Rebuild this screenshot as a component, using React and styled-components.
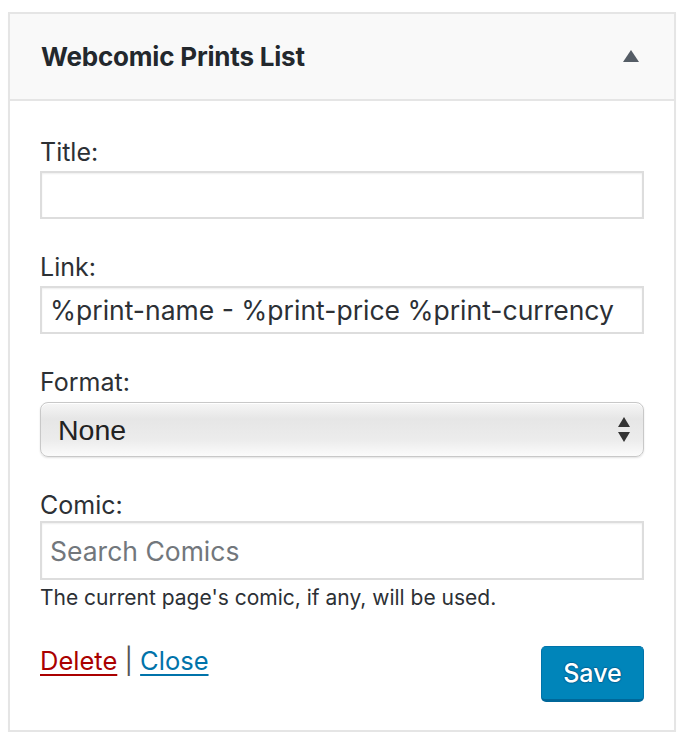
import styled, { createGlobalStyle } from "styled-components";

const GlobalStyle = createGlobalStyle`
    html, body {
        margin: 0;
        padding: 0;
        background: #fff;
    }
    body {
        font-family: Inter, "Liberation Sans", sans-serif;
        color: #32373c;
    }
    * { box-sizing: border-box; }
`;

const Page = styled.div`
    padding: 12px 10px 0 8px;
`;

const Widget = styled.div`
    width: 668px;
    border: 2px solid #e5e5e5;
    background: #fff;
    box-shadow: 0 1px 1px rgba(0,0,0,0.04);
`;

const Header = styled.div`
    display: flex;
    align-items: center;
    justify-content: space-between;
    height: 87px;
    padding: 0 35px 0 31px;
    background: #f9f9f9;
    border-bottom: 2px solid #e5e5e5;
`;

const HeaderTitle = styled.h3`
    margin: 0;
    font-size: 26px;
    font-weight: 700;
    color: #23282d;
    letter-spacing: -0.2px;
`;

const Toggle = styled.svg`
    width: 16px;
    height: 12px;
    fill: #555d66;
    margin-top: -2px;
`;

const Body = styled.div`
    display: flex;
    flex-direction: column;
    padding: 37px 30px 28px 30px;
`;

const Field = styled.div`
    display: flex;
    flex-direction: column;
    margin-bottom: ${(p) => p.$gap ?? 34}px;
`;

const Label = styled.label`
    font-size: 25px;
    line-height: 28px;
    color: #2c3035;
    margin-bottom: ${(p) => p.$space ?? 5}px;
`;

const TextInput = styled.input`
    width: 100%;
    height: ${(p) => p.$h ?? 48}px;
    padding: 0 8px;
    border: 2px solid #ddd;
    box-shadow: inset 0 1px 2px rgba(0,0,0,0.07);
    background: #fff;
    font-family: Inter, "Liberation Sans", sans-serif;
    font-size: 26.5px;
    color: #2c3035;
    outline: none;
    &::placeholder {
        color: #72777c;
    }
`;

const SelectWrap = styled.div`
    position: relative;
`;

const Select = styled.select`
    appearance: none;
    -webkit-appearance: none;
    width: 100%;
    height: 55px;
    padding: 0 40px 0 17px;
    border: 1px solid #c8c8c8;
    border-radius: 8px;
    background: linear-gradient(#f6f6f6 0%, #e6e6e6 30%, #ececec 70%, #fbfbfb 100%);
    box-shadow: 0 1px 2px rgba(0,0,0,0.12), inset 0 1px 0 #fff;
    font-family: "Liberation Sans", Arial, sans-serif;
    font-size: 28.5px;
    color: #222;
    outline: none;
`;

const Arrows = styled.svg`
    position: absolute;
    right: 13px;
    top: 15px;
    width: 14px;
    height: 26px;
    fill: #333;
    pointer-events: none;
`;

const Help = styled.p`
    margin: 6px 0 36px 0;
    font-size: 21px;
    line-height: 24px;
    color: #2c3035;
`;

const Actions = styled.div`
    display: flex;
    justify-content: space-between;
    align-items: flex-start;
`;

const Links = styled.div`
    font-size: 25.5px;
    line-height: 30px;
    color: #555;
`;

const ActionLink = styled.a`
    color: ${(p) => (p.$danger ? "#a00" : "#0073aa")};
    text-decoration: underline;
    text-decoration-thickness: 2px;
    text-underline-offset: 4px;
    cursor: pointer;
`;

const SaveButton = styled.button`
    width: 103px;
    height: 56px;
    border: 1px solid #0073aa;
    border-bottom: 3px solid #006799;
    border-radius: 5px;
    background: #0085ba;
    color: #fff;
    font-family: Inter, "Liberation Sans", sans-serif;
    font-size: 25px;
    font-weight: 500;
    padding: 0;
    text-shadow: 0 -1px 1px #006799, 1px 0 1px #006799, 0 1px 1px #006799, -1px 0 1px #006799;
    cursor: pointer;
`;

export default function App() {
    return (
        <Page>
            <GlobalStyle />
            <Widget>
                <Header>
                    <HeaderTitle>Webcomic Prints List</HeaderTitle>
                    <Toggle viewBox="0 0 16 12">
                        <polygon points="8,0 16,12 0,12" />
                    </Toggle>
                </Header>
                <Body>
                    <Field>
                        <Label>Title:</Label>
                        <TextInput type="text" defaultValue="" />
                    </Field>
                    <Field>
                        <Label>Link:</Label>
                        <TextInput type="text" defaultValue="%print-name - %print-price %print-currency" />
                    </Field>
                    <Field>
                        <Label $space={6}>Format:</Label>
                        <SelectWrap>
                            <Select defaultValue="none">
                                <option value="none">None</option>
                            </Select>
                            <Arrows viewBox="0 0 14 26">
                                <polygon points="7,0 13,10 1,10" />
                                <polygon points="1,15 13,15 7,25" />
                            </Arrows>
                        </SelectWrap>
                    </Field>
                    <Field $gap={0}>
                        <Label $space={2}>Comic:</Label>
                        <TextInput type="text" placeholder="Search Comics" $h={59} />
                    </Field>
                    <Help>The current page's comic, if any, will be used.</Help>
                    <Actions>
                        <Links>
                            <ActionLink $danger>Delete</ActionLink> | <ActionLink>Close</ActionLink>
                        </Links>
                        <SaveButton>Save</SaveButton>
                    </Actions>
                </Body>
            </Widget>
        </Page>
    );
}
